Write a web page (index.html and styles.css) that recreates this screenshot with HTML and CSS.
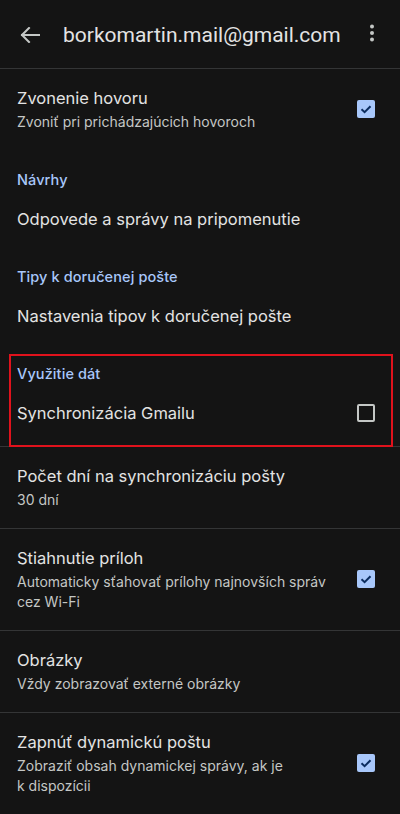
FILE: index.html
```html
<!DOCTYPE html>
<html lang="sk">
<head>
<meta charset="utf-8">
<title>Nastavenia</title>
<link rel="stylesheet" href="styles.css">
</head>
<body>
<div class="screen">
  <header class="topbar">
    <svg class="back" width="20" height="16" viewBox="0 0 20 16" aria-hidden="true">
      <path d="M2 8H19M2 8L9 1M2 8L9 15" fill="none" stroke="#c4c7c5" stroke-width="2" stroke-linecap="square"/>
    </svg>
    <div class="title">borkomartin.mail@gmail.com</div>
    <svg class="more" width="6" height="20" viewBox="0 0 6 20" aria-hidden="true">
      <circle cx="3" cy="3.5" r="2" fill="#c4c7c5"/>
      <circle cx="3" cy="10" r="2" fill="#c4c7c5"/>
      <circle cx="3" cy="16.5" r="2" fill="#c4c7c5"/>
    </svg>
  </header>
  <div class="divider"></div>

  <div class="item two">
    <div class="text">
      <div class="primary">Zvonenie hovoru</div>
      <div class="secondary">Zvoniť pri prichádzajúcich hovoroch</div>
    </div>
    <span class="check on"><svg viewBox="0 0 18 18"><path d="M4.5 9.3L7.6 12.2L13.5 6.3" fill="none" stroke="#0b2c5e" stroke-width="2"/></svg></span>
  </div>

  <div class="section">Návrhy</div>
  <div class="item single">
    <div class="text"><div class="primary">Odpovede a správy na pripomenutie</div></div>
  </div>

  <div class="section">Tipy k doručenej pošte</div>
  <div class="item single">
    <div class="text"><div class="primary">Nastavenia tipov k doručenej pošte</div></div>
  </div>

  <div class="marked">
    <div class="section">Využitie dát</div>
    <div class="item single last">
      <div class="text"><div class="primary">Synchronizácia Gmailu</div></div>
      <span class="check off"></span>
    </div>
  </div>
  <div class="divider"></div>

  <div class="item two">
    <div class="text">
      <div class="primary">Počet dní na synchronizáciu pošty</div>
      <div class="secondary">30 dní</div>
    </div>
  </div>
  <div class="divider"></div>

  <div class="item two">
    <div class="text">
      <div class="primary">Stiahnutie príloh</div>
      <div class="secondary">Automaticky sťahovať prílohy najnovších správ cez Wi-Fi</div>
    </div>
    <span class="check on"><svg viewBox="0 0 18 18"><path d="M4.5 9.3L7.6 12.2L13.5 6.3" fill="none" stroke="#0b2c5e" stroke-width="2"/></svg></span>
  </div>
  <div class="divider"></div>

  <div class="item two">
    <div class="text">
      <div class="primary">Obrázky</div>
      <div class="secondary">Vždy zobrazovať externé obrázky</div>
    </div>
  </div>
  <div class="divider"></div>

  <div class="item two">
    <div class="text">
      <div class="primary">Zapnúť dynamickú poštu</div>
      <div class="secondary">Zobraziť obsah dynamickej správy, ak je k&nbsp;dispozícii</div>
    </div>
    <span class="check on"><svg viewBox="0 0 18 18"><path d="M4.5 9.3L7.6 12.2L13.5 6.3" fill="none" stroke="#0b2c5e" stroke-width="2"/></svg></span>
  </div>
</div>
</body>
</html>
```

FILE: styles.css
```css
html, body {
  margin: 0;
  padding: 0;
  background: #141414;
}
body {
  font-family: Inter, Roboto, "Noto Sans", "Liberation Sans", sans-serif;
  color: #e3e3e3;
  width: 400px;
  height: 814px;
  overflow: hidden;
}
.screen {
  display: flex;
  flex-direction: column;
}
.topbar {
  height: 68px;
  display: flex;
  align-items: center;
  padding-left: 20px;
  box-sizing: border-box;
}
.back {
  display: block;
  flex: none;
  margin-top: 1px;
}
.title {
  margin-left: 23px;
  font-family: Roboto, "Noto Sans", sans-serif;
  font-size: 21px;
  line-height: 28px;
  color: #e3e3e3;
  flex: 1;
  white-space: nowrap;
  margin-top: 1px;
}
.more {
  display: block;
  flex: none;
  margin-right: 25px;
  margin-top: -2px;
}
.divider {
  height: 1px;
  background: #343536;
  flex: none;
}
.item {
  display: flex;
  align-items: center;
  padding: 17px 25px 18px 17px;
}
.item.single {
  padding-bottom: 16px;
}
.item.single.last {
  padding-bottom: 21px;
}
.text {
  flex: 1;
  min-width: 0;
  padding-right: 18px;
}
.primary {
  font-size: 16.5px;
  line-height: 24px;
  color: #e3e3e3;
}
.secondary {
  font-size: 14px;
  line-height: 20px;
  margin-top: 2px;
  color: #c4c7c5;
}
.section {
  padding: 20px 17px 0;
  font-size: 14.5px;
  letter-spacing: 0.1px;
  line-height: 20px;
  font-weight: 500;
  color: #a8c7fa;
}
.check {
  flex: none;
  width: 18px;
  height: 18px;
  box-sizing: border-box;
  border-radius: 2px;
  display: block;
}
.check svg {
  display: block;
  width: 18px;
  height: 18px;
}
.check.on {
  background: #a8c7fa;
}
.check.off {
  border: 2px solid #c4c7c5;
}
.marked {
  position: relative;
}
.marked::after {
  content: "";
  position: absolute;
  left: 9px;
  right: 7px;
  top: 10px;
  bottom: -1px;
  border: 2px solid #e0121c;
  pointer-events: none;
}
```
